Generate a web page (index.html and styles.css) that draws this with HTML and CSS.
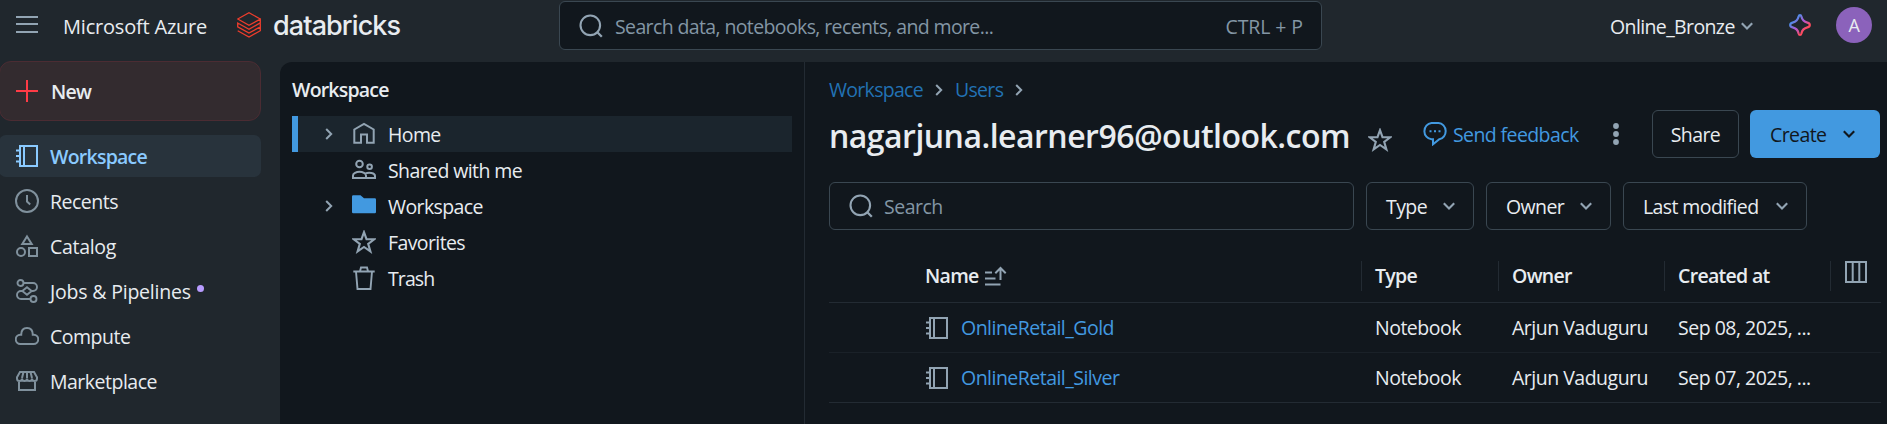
FILE: index.html
```html
<!DOCTYPE html>
<html lang="en">
<head>
<meta charset="utf-8">
<title>Workspace - Databricks</title>
<link rel="stylesheet" href="styles.css">
</head>
<body>
<svg class="defs" aria-hidden="true">
  <symbol id="notebook" viewBox="0 0 24 24"><path fill="none" stroke="currentColor" stroke-width="2" d="M5 2h17v20H5zM9 2v20M1 6.500h4M1 12h4M1 17.500h4"/></symbol>
  <symbol id="down" viewBox="0 0 12 8"><path fill="none" stroke="currentColor" stroke-width="2.1" d="M.8 1.2L6 6.4l5.2-5.2"/></symbol>
  <symbol id="right" viewBox="0 0 8 12"><path fill="none" stroke="currentColor" stroke-width="2" d="M1.2 1L6.2 6l-5 5"/></symbol>
  <symbol id="search" viewBox="0 0 24 24"><circle cx="11.3" cy="11.3" r="9.8" fill="none" stroke="currentColor" stroke-width="2.1"/><path stroke="currentColor" stroke-width="2.3" d="M17.8 17.8l5 5"/></symbol>
  <symbol id="star" viewBox="0 0 24 24"><path fill="none" stroke="currentColor" stroke-width="2.1" d="M12 2.2l2.5 7 7.800.100-6.100 4.600 2.200 7.500-6.400-4.400-6.400 4.400 2.200-7.500-6.100-4.600 7.800-.100z"/></symbol>
</svg>

<header class="topbar">
  <svg class="menu" viewBox="0 0 22 18"><path stroke="currentColor" stroke-width="2" d="M0 1h22M0 8h22M0 16h22"/></svg>
  <span class="azure">Microsoft Azure</span>
  <svg class="brick" viewBox="0 0 24 26" fill="none" stroke="#ee3d2c" stroke-width="1.3"><path d="M22.800 6.700L12 .8.700 7 12 13.300l11.300-6.200v3.800L12 17.200.700 11v3.800L12 21.100l11.300-6.200v3.800L12 25 .700 18.800M.700 11l0 0M23.300 11v3.900"/></svg>
  <span class="brand">databricks</span>
  <div class="global-search">
    <svg class="ic24"><use href="#search"/></svg>
    <span class="gs-text">Search data, notebooks, recents, and more...</span>
    <span class="shortcut">CTRL + P</span>
  </div>
  <span class="ws-name">Online_Bronze</span>
  <svg class="chev ws-chev"><use href="#down"/></svg>
  <svg class="spark" viewBox="0 0 22 22"><defs><linearGradient id="g" x1="0" y1="0" x2="1" y2="1"><stop offset=".2" stop-color="#4a8fea"/><stop offset=".5" stop-color="#b458d0"/><stop offset=".75" stop-color="#ff4a5c"/></linearGradient></defs><path fill="none" stroke="url(#g)" stroke-width="2.2" stroke-linejoin="round" d="M11 1.200c.9 0 1.200.6 1.400 1.400.8 3.600 2.400 5.200 6 6 .9.200 2.400.9 2.400 2.400s-1.500 2.200-2.400 2.400c-3.600.8-5.200 2.400-6 6-.2.800-.5 1.400-1.400 1.400s-1.200-.6-1.400-1.400c-.8-3.600-2.400-5.200-6-6C2.700 13.200 1.200 12.500 1.200 11s1.500-2.200 2.400-2.400c3.600-.8 5.200-2.400 6-6 .2-.8.5-1.400 1.400-1.400z"/></svg>
  <span class="avatar">A</span>
</header>

<div class="body">
  <nav class="side">
    <div class="new"><svg class="plus" viewBox="0 0 22 22"><path stroke="#ff3b46" stroke-width="2" d="M0 11h22M11 0v22"/></svg><span>New</span></div>
    <div class="item active"><svg class="ic24"><use href="#notebook"/></svg><span>Workspace</span></div>
    <div class="item"><svg class="ic24" viewBox="0 0 24 24" fill="none" stroke="currentColor" stroke-width="2"><circle cx="12" cy="12" r="11"/><path d="M12 6v6.500l3.200 3"/></svg><span>Recents</span></div>
    <div class="item"><svg class="ic24" viewBox="0 0 24 24" fill="none" stroke="currentColor" stroke-width="2"><path d="M12 2.500L16.700 10H7.300z"/><circle cx="6" cy="18" r="4"/><path d="M14 14h8v8h-8z"/></svg><span class="wide">Catalog</span></div>
    <div class="item"><svg class="ic24" viewBox="0 0 24 24" fill="none" stroke="currentColor" stroke-width="1.900"><circle cx="5.500" cy="4" r="3"/><circle cx="18.500" cy="20" r="3"/><path d="M8.500 4H18a3.600 3.600 0 0 1 0 8h-1.500M15.500 20H6a3.900 3.900 0 0 1 0-8h1.500M12 8.200l4.700 3.800-4.700 3.800L7.300 12z"/></svg><span class="jobs">Jobs &amp; Pipelines</span><i class="dot"></i></div>
    <div class="item"><svg class="ic24" viewBox="0 0 24 24" fill="none" stroke="currentColor" stroke-width="2"><path d="M5.500 20a4.600 4.600 0 0 1-.3-9.200h1C6.200 6.500 8.500 4 12 4s5.800 2.500 5.800 6.800h1a4.600 4.600 0 0 1-.3 9.200z"/></svg><span>Compute</span></div>
    <div class="item"><svg class="ic24" viewBox="0 0 24 24" fill="none" stroke="currentColor" stroke-width="2"><path d="M5 3h14l3 5.200v1.300a2.500 2.500 0 0 1-5 0 2.500 2.500 0 0 1-5 0 2.500 2.500 0 0 1-5 0 2.500 2.500 0 0 1-5 0V8.200zM8.500 3L7 9M15.500 3L17 9M12 3v6M4 11.500V21h16v-9.500"/></svg><span>Marketplace</span></div>
  </nav>

  <div class="panel">
    <section class="tree">
      <h2>Workspace</h2>
      <div class="node sel"><svg class="rc"><use href="#right"/></svg><svg class="ic24" viewBox="0 0 24 24" fill="none" stroke="currentColor" stroke-width="2"><path d="M2.300 7.500L12 1.800l9.700 5.700v13.300H15V12.500H9v8.300H2.300z"/></svg><span>Home</span></div>
      <div class="node"><i class="rc"></i><svg class="ic24" viewBox="0 0 24 24" fill="none" stroke="currentColor" stroke-width="2"><circle cx="7.500" cy="6" r="3.300"/><circle cx="17.600" cy="8.700" r="2.300"/><path d="M1 20v-2.500c0-2 3.200-3.700 6.500-3.700s6.500 1.700 6.500 3.700V20zM13 15.700c4-1.700 10-.7 10 2.200V20h-9"/></svg><span>Shared with me</span></div>
      <div class="node"><svg class="rc"><use href="#right"/></svg><svg class="ic24" viewBox="0 0 24 24"><path fill="#4299e0" d="M0 2.500q0-1.200 1.200-1.200H8.500l3.500 3h10.800q1.200 0 1.200 1.200v12.600q0 1.200-1.200 1.200H1.200Q0 19.300 0 18.100z"/></svg><span>Workspace</span></div>
      <div class="node"><i class="rc"></i><svg class="ic24"><use href="#star"/></svg><span>Favorites</span></div>
      <div class="node"><i class="rc"></i><svg class="ic24" viewBox="0 0 24 24" fill="none" stroke="currentColor" stroke-width="1.900"><path d="M1.300 5.500h21.400M4 5.500L5.500 23h13L20 5.500M8 5.300L9 1.500h6l1 3.800"/></svg><span class="trash">Trash</span></div>
    </section>

    <main class="main">
      <div class="crumbs"><a class="c1">Workspace</a><svg class="rc"><use href="#right"/></svg><a class="c2">Users</a><svg class="rc"><use href="#right"/></svg></div>
      <div class="head">
        <h1>nagarjuna.learner96@outlook.com</h1>
        <svg class="ic24 fav"><use href="#star"/></svg>
        <svg class="ic24 bubble" viewBox="0 0 24 24"><path fill="none" stroke="currentColor" stroke-width="2" d="M8.500 1h7a7.500 8.200 0 0 1 .8 16.300L10 22.300v-5H8.500A8 8.200 0 0 1 8.500 1z"/><path stroke="currentColor" stroke-width="2" d="M6.500 9.300h2M11 9.300h2M15.500 9.300h2"/></svg>
        <a class="feedback">Send feedback</a>
        <svg class="dots" viewBox="0 0 6 24" fill="currentColor"><circle cx="3" cy="4" r="2.900"/><circle cx="3" cy="12" r="2.900"/><circle cx="3" cy="20" r="2.900"/></svg>
        <button class="btn share"><span>Share</span></button>
        <button class="btn create"><span>Create</span><svg class="chev"><use href="#down"/></svg></button>
      </div>
      <div class="filters">
        <div class="field"><svg class="ic24"><use href="#search"/></svg><span>Search</span></div>
        <button class="btn f1"><span>Type</span><svg class="chev"><use href="#down"/></svg></button>
        <button class="btn f2"><span>Owner</span><svg class="chev"><use href="#down"/></svg></button>
        <button class="btn f3"><span>Last modified</span><svg class="chev"><use href="#down"/></svg></button>
      </div>
      <div class="table">
        <div class="row th">
          <div class="name"><span class="h-name">Name</span><svg class="sort" viewBox="0 0 22 20"><path fill="none" stroke="currentColor" stroke-width="2" d="M0 6.500h7M0 12.500h10.500M0 18.500h15.500M15.500 14V2.500M10.300 7.200l5.200-5.200 5.200 5.200"/></svg></div>
          <div class="cell">Type</div><div class="cell">Owner</div><div class="cell">Created at</div>
          <div class="cell cols"><svg viewBox="0 0 22 22"><path fill="none" stroke="currentColor" stroke-width="2" d="M1 1h20v20H1zM7.700 1v20M14.300 1v20"/></svg></div>
        </div>
        <div class="row r1">
          <div class="name"><svg class="nb"><use href="#notebook"/></svg><a class="link">OnlineRetail_Gold</a></div>
          <div class="cell">Notebook</div><div class="cell">Arjun Vaduguru</div><div class="cell">Sep 08, 2025, ...</div>
        </div>
        <div class="row r2">
          <div class="name"><svg class="nb"><use href="#notebook"/></svg><a class="link">OnlineRetail_Silver</a></div>
          <div class="cell">Notebook</div><div class="cell">Arjun Vaduguru</div><div class="cell">Sep 07, 2025, ...</div>
        </div>
      </div>
    </main>
  </div>
</div>
</body>
</html>
```
FILE: styles.css
```css
* { box-sizing: border-box; }
body {
  margin: 0;
  width: 1887px;
  height: 424px;
  overflow: hidden;
  background: #20272d;
  color: #e8ecf0;
  font: 19.5px/30px "Open Sans", "Noto Sans", sans-serif;
  letter-spacing: -0.5px;
  white-space: nowrap;
}
.defs { position: absolute; width: 0; height: 0; }
svg { flex: none; display: block; }
span, a { flex: none; }
.ic24 { width: 24px; height: 24px; color: #92a4b3; }
.chev { width: 12px; height: 8px; color: #92a4b3; }
.rc { width: 8px; height: 12px; color: #92a4b3; flex: none; }

.topbar { display: flex; align-items: center; height: 52px; padding-left: 16px; }
.menu { width: 22px; height: 18px; color: #92a4b3; margin-right: 25px; margin-top: -2px; }
.azure { width: 174px; font-size: 20px; letter-spacing: -0.2px; padding-top: 1px; }
.brick { width: 24px; height: 26px; margin-right: 12px; margin-top: -2px; }
.brand { width: 286px; font: 500 27px/40px Inter, sans-serif; letter-spacing: -0.9px; }
.global-search {
  display: flex;
  align-items: center;
  width: 763px;
  height: 49px;
  margin-top: -1px;
  padding: 0 18px 0 19px;
  border: 1px solid #3a4751;
  border-radius: 6px;
  background: #11171d;
  color: #8396a5;
}
.gs-text { margin-left: 12px; flex: 1; letter-spacing: -0.62px; padding-top: 2px; }
.shortcut { padding-top: 2px; letter-spacing: -0.1px; }
.ws-name { width: 131px; margin-left: 288px; padding-top: 1px; letter-spacing: -0.62px; }
.ws-chev { margin-top: -1px; }
.spark { width: 22px; height: 22px; margin: -2px 25px 0 36px; }
.avatar {
  width: 36px;
  height: 36px;
  border-radius: 50%;
  background: #8b62bb;
  text-align: center;
  line-height: 37px;
  font-size: 18px;
  margin-top: -2px;
}

.body { display: flex; }
.side { width: 280px; padding-top: 9px; }
.new, .item {
  display: flex;
  align-items: center;
  width: 262px;
  margin-left: -1px;
  padding-left: 16px;
  gap: 11px;
}
.new {
  height: 60px;
  margin-bottom: 14px;
  gap: 13px;
  border: 1px solid #4b2c33;
  border-radius: 12px;
  background: #332b2f;
  font-weight: 600;
  letter-spacing: -0.8px;
}
.new span { padding-top: 2px; }
.plus { width: 22px; height: 22px; }
.item { height: 42px; margin-bottom: 3px; border-radius: 7px; }
.item span { padding-top: 1px; }
.item .wide { letter-spacing: -0.3px; }
.item .jobs { letter-spacing: -0.2px; }
.item .ic24 { color: #80919d; }
.active { background: #28333c; color: #8acaff; font-weight: 600; letter-spacing: -0.75px; }
.item.active .ic24 { color: #8acaff; }
.dot { width: 7px; height: 7px; border-radius: 50%; background: #b89cff; margin: -6px 0 0 -5px; }

.panel {
  display: flex;
  width: 1607px;
  height: 362px;
  margin-top: 10px;
  border-top-left-radius: 12px;
  background: #11171d;
}
.tree { width: 525px; padding: 13px 12px 0; border-right: 1px solid #232b33; }
h2 { margin: 0 0 11px; font-size: 19.5px; line-height: 30px; font-weight: 600; letter-spacing: -0.8px; }
.node { display: flex; align-items: center; height: 36px; padding-left: 33px; }
.node .ic24 { margin: 0 12px 0 19px; }
.node span { padding-top: 1px; letter-spacing: -0.6px; }
.node .trash { letter-spacing: -0.9px; }
.sel { background: #1b252d; border-left: 6px solid #4299e0; padding-left: 27px; }

.main { width: 1082px; padding: 13px 6px 0 24px; }
.crumbs { display: flex; align-items: center; height: 30px; color: #2272b4; letter-spacing: -0.7px; }
.c1 { width: 106px; }
.c2 { width: 60px; margin-left: 12px; }
.head { display: flex; align-items: center; height: 48px; margin-top: 5px; }
h1 { margin: 0; padding-top: 3px; width: 539px; font-size: 32px; line-height: 44px; font-weight: 600; letter-spacing: -0.52px; }
.fav { margin-top: 11px; margin-right: 31px; }
.bubble { color: #4299e0; margin-right: 6px; }
.feedback { width: 160px; padding-top: 2px; color: #4299e0; letter-spacing: -0.6px; }
.dots { width: 6px; height: 24px; color: #92a4b3; margin-right: 33px; }
.btn {
  display: flex;
  align-items: center;
  justify-content: space-between;
  height: 48px;
  padding: 0 18px 0 19px;
  border: 1px solid #3a4751;
  border-radius: 6px;
  background: none;
  color: inherit;
  font: inherit;
  letter-spacing: -0.6px;
  flex: none;
}
.btn span, .field span { padding-top: 1px; }
.share { width: 87px; justify-content: center; padding: 0; margin-right: 11px; }
.share span { padding-top: 2px; }
.create { width: 130px; border: 0; padding: 0 25px 0 20px; background: #4299e0; color: #11171d; }
.create span { padding-top: 2px; }
.create .chev { color: #11171d; }
.filters { display: flex; gap: 12px; margin-top: 24px; }
.field {
  display: flex;
  align-items: center;
  width: 525px;
  height: 48px;
  padding-left: 19px;
  gap: 11px;
  border: 1px solid #3a4751;
  border-radius: 6px;
  color: #8396a5;
}
.f1 { width: 108px; }
.f2 { width: 125px; }
.f3 { width: 184px; }

.table { margin-top: 20px; }
.row {
  display: grid;
  grid-template-columns: 532px 137px 166px 166px 50px;
  align-items: center;
  height: 50px;
  border-bottom: 1px solid #232b33;
}
.name { display: flex; align-items: center; padding-left: 96px; }
.cell { padding-left: 14px; }
.th { height: 53px; font-weight: 600; letter-spacing: -0.7px; }
.th .cell { border-left: 1px solid #232b33; padding-left: 13px; }
.sort { width: 22px; height: 20px; color: #92a4b3; margin-left: 6px; }
.row .cols { height: 30px; color: #92a4b3; padding: 0 0 0 14px; }
.cols svg { width: 22px; height: 22px; }
.r1 { height: 50px; border-bottom-color: #1a2128; }
.r2 { height: 50px; }
.nb { width: 24px; height: 24px; color: #92a4b3; }
.link { margin-left: 12px; color: #4299e0; letter-spacing: -0.52px; }
```
